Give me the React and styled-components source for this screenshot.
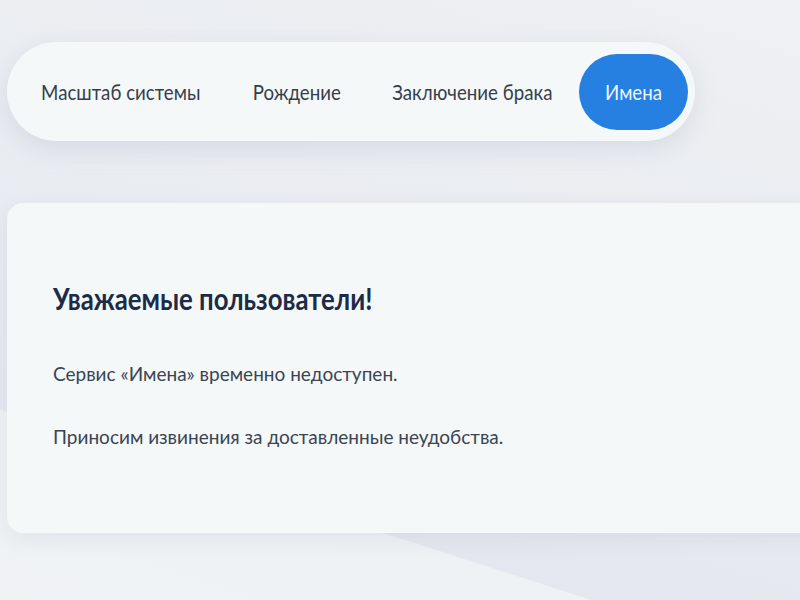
import React from "react";
import styled, { createGlobalStyle } from "styled-components";

const Global = createGlobalStyle`
  html, body { margin: 0; padding: 0; }
  body {
    width: 800px;
    height: 600px;
    overflow: hidden;
    font-family: Lato, "Open Sans", sans-serif;
    background: linear-gradient(
      197.85deg,
      #eef0f3 0%,
      #e9ecf1 50%,
      #e4e7ef 77.7%,
      #eff2f4 77.9%,
      #f0f2f4 100%
    );
  }
`;

const Page = styled.div`
  display: flex;
  flex-direction: column;
  padding: 42px 0 0 7px;
  gap: 62px;
`;

const Nav = styled.nav`
  display: flex;
  align-items: center;
  width: 688px;
  height: 99px;
  box-sizing: border-box;
  padding: 0 7px 0 34px;
  border-radius: 50px;
  background: #f5f8f9;
  box-shadow: 0 8px 24px rgba(160, 172, 190, 0.28);
`;

const Tab = styled.div`
  flex: none;
  display: flex;
  align-items: center;
  justify-content: center;
  width: ${(p) => p.$w}px;
  height: 76px;
  margin-right: ${(p) => p.$gap || 0}px;
  border-radius: 38px;
  background: ${(p) => (p.$active ? "#2580e2" : "transparent")};
  color: ${(p) => (p.$active ? "#eef5ff" : "#363e4a")};
  font-size: 22px;
  white-space: nowrap;
`;

const Label = styled.span`
  flex: none;
  display: inline-block;
  transform: scaleX(0.85);
  transform-origin: center;
`;

const Card = styled.section`
  width: 820px;
  height: 330px;
  box-sizing: border-box;
  padding: 76px 0 0 46px;
  border-radius: 16px;
  background: #f4f8f9;
  box-shadow: 0 6px 20px rgba(160, 172, 190, 0.2);
`;

const Title = styled.h1`
  margin: 0 0 45px;
  font-size: 31px;
  font-weight: 700;
  color: #1c2c47;
  transform: scaleX(0.83);
  transform-origin: left center;
  white-space: nowrap;
`;

const Text = styled.p`
  margin: 0 0 ${(p) => p.$mb || 0}px;
  font-size: 19px;
  color: #3a4452;
`;

const tabs = [
  { label: "Масштаб системы", w: 159, gap: 52 },
  { label: "Рождение", w: 89, gap: 51 },
  { label: "Заключение брака", w: 161, gap: 26 },
  { label: "Имена", w: 109, active: true },
];

export default function App() {
  return (
    <>
      <Global />
      <Page>
        <Nav>
          {tabs.map((t) => (
            <Tab key={t.label} $w={t.w} $gap={t.gap} $active={t.active}>
              <Label>{t.label}</Label>
            </Tab>
          ))}
        </Nav>
        <Card>
          <Title>Уважаемые пользователи!</Title>
          <Text $mb={40}>Сервис «Имена» временно недоступен.</Text>
          <Text>Приносим извинения за доставленные неудобства.</Text>
        </Card>
      </Page>
    </>
  );
}
